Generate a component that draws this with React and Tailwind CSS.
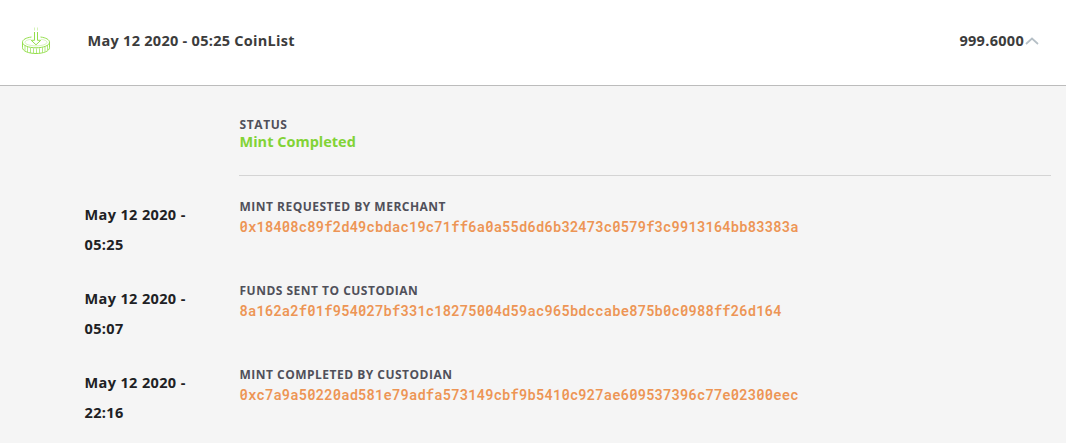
import React from "react";

const steps = [
  {
    date: "May 12 2020 -",
    time: "05:25",
    title: "MINT REQUESTED BY MERCHANT",
    hash: "0x18408c89f2d49cbdac19c71ff6a0a55d6d6b32473c0579f3c9913164bb83383a",
  },
  {
    date: "May 12 2020 -",
    time: "05:07",
    title: "FUNDS SENT TO CUSTODIAN",
    hash: "8a162a2f01f954027bf331c18275004d59ac965bdccabe875b0c0988ff26d164",
  },
  {
    date: "May 12 2020 -",
    time: "22:16",
    title: "MINT COMPLETED BY CUSTODIAN",
    hash: "0xc7a9a50220ad581e79adfa573149cbf9b5410c927ae609537396c77e02300eec",
  },
];

function MintIcon() {
  return (
    <svg className="h-[28px] w-[30px] shrink-0" viewBox="0 0 30 28" fill="none" stroke="#94df4c" strokeWidth="1">
      <path d="M10.500 10C5 10.700 1.500 12.700 1.500 15.200c0 3.300 6 5.600 13.500 5.600s13.500-2.300 13.500-5.600c0-2.500-3.500-4.500-9-5.200" />
      <path d="M10 12.300C6 12.900 4 14 4 15.300c0 2 4.900 3.500 11 3.500s11-1.500 11-3.500c0-1.300-2-2.400-6-3" strokeWidth="0.500" strokeOpacity="0.700" />
      <path d="M1.500 15.200v5.500c0 3.300 6 5.800 13.500 5.800s13.500-2.500 13.500-5.800v-5.500" />
      <path d="M4 18.500v5M6.500 20v5M9.500 21v5M12.500 21.300v5M15.500 21.500v5M18.500 21.300v5M21.500 20.500v5M24 19.500v5M26.500 18v5" strokeWidth="0.700" />
      <path d="M13.500 5v8.300h-3.300L15 17.800l4.800-4.500h-3.300V5" />
      <path d="M13.500 0.500v3M16.500 0.500v3" strokeWidth="0.800" strokeOpacity="0.500" />
    </svg>
  );
}

export default function App() {
  return (
    <main className="h-[443px] w-full overflow-hidden bg-[#f5f5f5] font-['Open_Sans','Noto_Sans',sans-serif]">
      <header className="flex h-[86px] items-center border-b border-[#bcbcbc] bg-white pr-[27px] pb-[3px] pl-[21px]">
        <MintIcon />
        <span className="ml-[36.500px] text-[14.500px] leading-5 font-bold tracking-[0.280px] whitespace-nowrap text-[#3c3c3c]">May 12 2020 - 05:25 CoinList</span>
        <span className="ml-auto text-[14.500px] leading-5 font-bold tracking-[0.300px] text-[#3c3c3c]">999.6000</span>
        <svg className="ml-[1px] h-[8px] w-[14px]" viewBox="0 0 14 8" fill="none" stroke="#b5bfc6" strokeWidth="1.700">
          <path d="M1 7l6-5.500L13 7" />
        </svg>
      </header>
      <section className="pr-[15px] pl-[84.500px]">
        <div className="ml-[154.500px] h-[90px] border-b border-[#d4d4d4] pt-[30px] pl-[0.500px]">
          <h2 className="text-[12px] leading-[17px] font-bold tracking-[0.600px] text-[#50505a]">STATUS</h2>
          <p className="text-[14.500px] leading-[18px] font-bold text-[#82d336]">Mint Completed</p>
        </div>
        <div className="pt-[22px]">
          {steps.map((step) => (
            <article key={step.time} className="flex h-[84px]">
              <time className="w-[155px] shrink-0 pt-[2px] text-[14.500px] leading-[30px] font-bold tracking-[0.370px] text-[#202124]">
                <span className="block">{step.date}</span>
                <span className="block">{step.time}</span>
              </time>
              <div>
                <h3 className="text-[12px] leading-[18px] font-bold tracking-[0.490px] whitespace-nowrap text-[#50505a]">{step.title}</h3>
                <p className="font-['Roboto_Mono','DejaVu_Sans_Mono',monospace] text-[14px] leading-[22px] font-semibold tracking-[0.070px] whitespace-nowrap text-[#ed9555]">{step.hash}</p>
              </div>
            </article>
          ))}
        </div>
      </section>
    </main>
  );
}
